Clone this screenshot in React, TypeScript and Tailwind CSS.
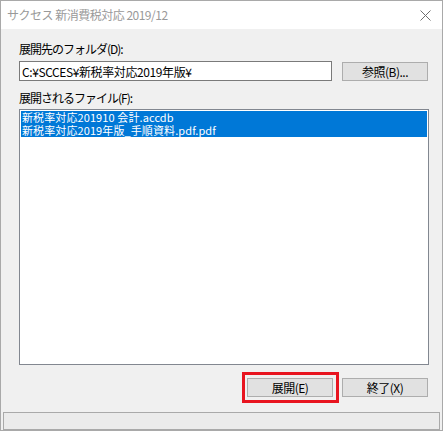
import { useState } from 'react';

const FONT = '"Noto Sans CJK JP", "Noto Sans", sans-serif';

interface WinButtonProps {
  label: string;
  highlight?: boolean;
}

const WinButton = ({ label, highlight = false }: WinButtonProps) => (
  <div className="relative">
    <button
      type="button"
      className="flex h-[19px] w-[86px] items-center justify-center border border-[#adadad] bg-[#e1e1e1] text-[12px] leading-none tracking-[-0.5px] text-black"
    >
      {label}
    </button>
    {/* red annotation frame */}
    {highlight && (
      <span className="pointer-events-none absolute -bottom-[6px] -left-[5px] -right-[6px] -top-[6px] border-[3px] border-[#e8141f]" />
    )}
  </div>
);

export default function App() {
  const [folder, setFolder] = useState('C:¥SCCES¥新税率対応2019年版¥');
  const files = ['新税率対応201910 会計.accdb', '新税率対応2019年版_手順資料.pdf.pdf'];

  return (
    <div
      className="flex h-[431px] w-[443px] flex-col border border-[#a9a9a9] bg-[#f0f0f0] text-black"
      style={{ fontFamily: FONT }}
    >
      {/* Title bar */}
      <div className="flex h-[28px] shrink-0 items-center justify-between bg-white pl-[6px] pr-[11px]">
        <span className="text-[12px] tracking-[-0.5px] text-[#999999]">サクセス 新消費税対応 2019/12</span>
        <svg width="11" height="11" viewBox="0 0 11 11" className="text-[#6f6f6f]">
          <path d="M0.5 0.5 L10.5 10.5 M10.5 0.5 L0.5 10.5" stroke="currentColor" strokeWidth="1" fill="none" />
        </svg>
      </div>

      {/* Body */}
      <div className="flex flex-1 flex-col pl-[18px] pr-[12px]">
        <div className="mt-[13px] h-[14px] text-[12px] leading-[14px] tracking-[-1px]">展開先のフォルダ(D):</div>
        <div className="mt-[5px] flex items-end gap-[10px]">
          <input
            value={folder}
            onChange={(e) => setFolder(e.target.value)}
            className="h-[20px] w-[313px] shrink-0 border border-[#7a7a7a] bg-white px-[2px] text-[12px] leading-none tracking-[-0.4px] outline-none"
          />
          <WinButton label="参照(B)..." />
        </div>

        <div className="mt-[10px] h-[14px] text-[12px] leading-[14px] tracking-[-1px]">展開されるファイル(F):</div>
        <div className="mt-[4px] h-[256px] w-[410px] border border-[#828790] bg-white p-[1px]">
          {files.map((f) => (
            <div
              key={f}
              className="h-[13px] bg-[#0078d7] pl-[1px] text-[11px] leading-[13px] tracking-[0.1px] text-white"
            >
              {f}
            </div>
          ))}
        </div>

        <div className="mt-[13px] flex justify-end gap-[9px] pr-[2px]">
          <WinButton label="展開(E)" highlight />
          <WinButton label="終了(X)" />
        </div>
      </div>

      {/* Status bar */}
      <div className="mx-[2px] h-[18px] shrink-0 border border-[#a9a9a9] bg-[#ebebeb]" />
    </div>
  );
}
